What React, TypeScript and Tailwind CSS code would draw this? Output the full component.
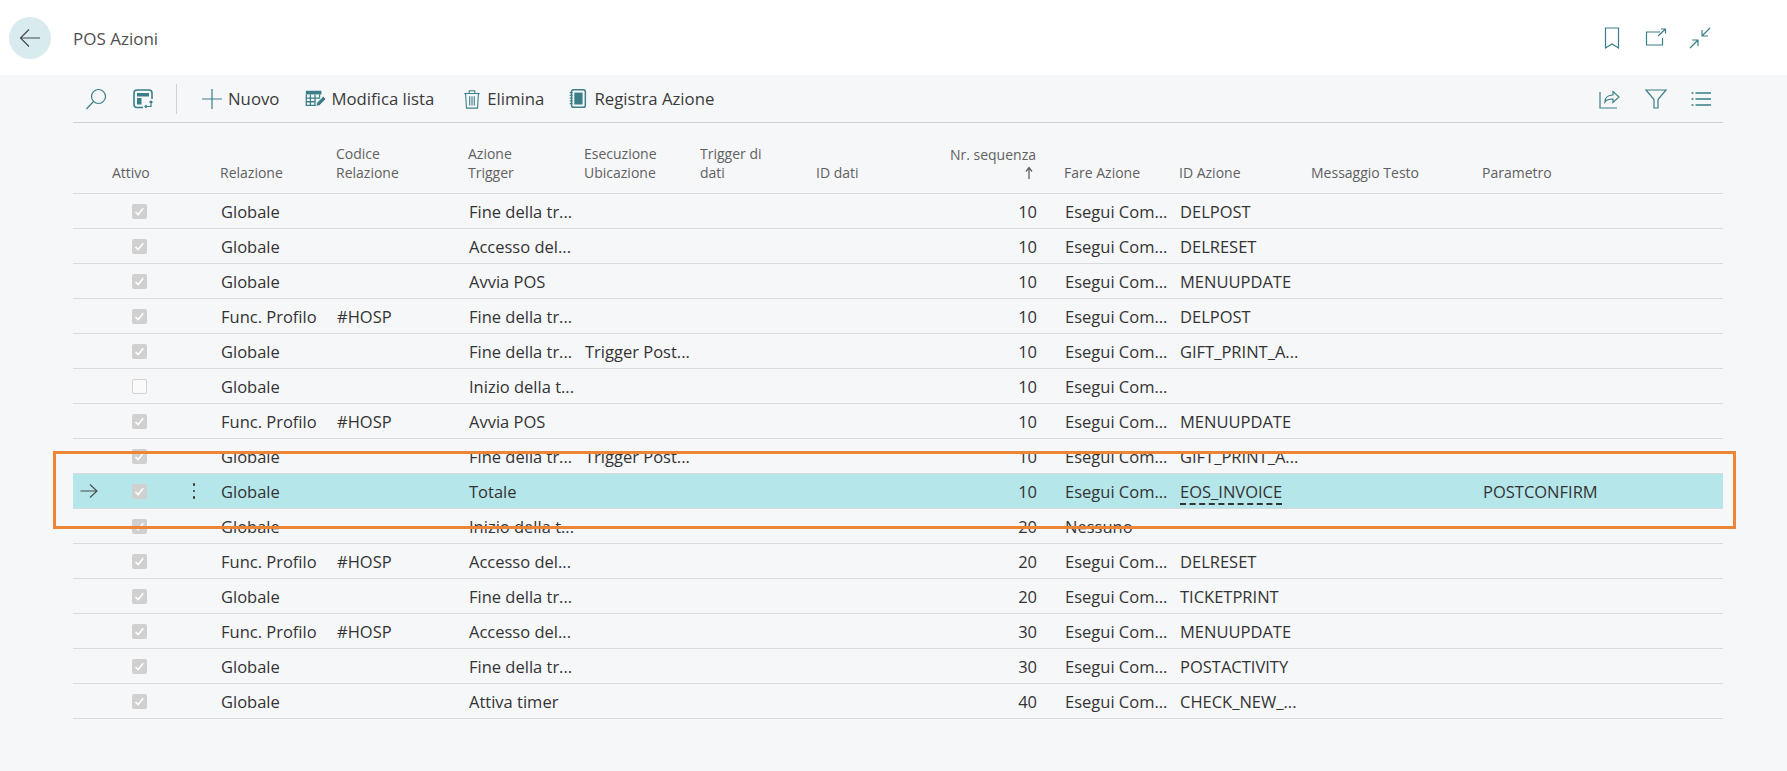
import React from 'react';

type Row = {
  on: boolean;
  rel: string;
  code?: string;
  trigger: string;
  loc?: string;
  seq: number;
  does: string;
  id?: string;
  param?: string;
  selected?: boolean;
};

const rows: Row[] = [
  { on: true, rel: 'Globale', trigger: 'Fine della tr...', seq: 10, does: 'Esegui Com...', id: 'DELPOST' },
  { on: true, rel: 'Globale', trigger: 'Accesso del...', seq: 10, does: 'Esegui Com...', id: 'DELRESET' },
  { on: true, rel: 'Globale', trigger: 'Avvia POS', seq: 10, does: 'Esegui Com...', id: 'MENUUPDATE' },
  { on: true, rel: 'Func. Profilo', code: '#HOSP', trigger: 'Fine della tr...', seq: 10, does: 'Esegui Com...', id: 'DELPOST' },
  { on: true, rel: 'Globale', trigger: 'Fine della tr...', loc: 'Trigger Post...', seq: 10, does: 'Esegui Com...', id: 'GIFT_PRINT_A...' },
  { on: false, rel: 'Globale', trigger: 'Inizio della t...', seq: 10, does: 'Esegui Com...' },
  { on: true, rel: 'Func. Profilo', code: '#HOSP', trigger: 'Avvia POS', seq: 10, does: 'Esegui Com...', id: 'MENUUPDATE' },
  { on: true, rel: 'Globale', trigger: 'Fine della tr...', loc: 'Trigger Post...', seq: 10, does: 'Esegui Com...', id: 'GIFT_PRINT_A...' },
  { on: true, rel: 'Globale', trigger: 'Totale', seq: 10, does: 'Esegui Com...', id: 'EOS_INVOICE', param: 'POSTCONFIRM', selected: true },
  { on: true, rel: 'Globale', trigger: 'Inizio della t...', seq: 20, does: 'Nessuno' },
  { on: true, rel: 'Func. Profilo', code: '#HOSP', trigger: 'Accesso del...', seq: 20, does: 'Esegui Com...', id: 'DELRESET' },
  { on: true, rel: 'Globale', trigger: 'Fine della tr...', seq: 20, does: 'Esegui Com...', id: 'TICKETPRINT' },
  { on: true, rel: 'Func. Profilo', code: '#HOSP', trigger: 'Accesso del...', seq: 30, does: 'Esegui Com...', id: 'MENUUPDATE' },
  { on: true, rel: 'Globale', trigger: 'Fine della tr...', seq: 30, does: 'Esegui Com...', id: 'POSTACTIVITY' },
  { on: true, rel: 'Globale', trigger: 'Attiva timer', seq: 40, does: 'Esegui Com...', id: 'CHECK_NEW_...' },
];

const grid = 'grid grid-cols-[39px_68px_40px_116px_132px_116px_116px_116px_248px_115px_132px_171px_241px]';
const cell = 'pl-px pt-[2px] whitespace-nowrap';

function Icon({ children, className }: { children: React.ReactNode; className: string }) {
  return (
    <svg viewBox="0 0 24 24" fill="none" stroke="currentColor" strokeWidth="1.2" className={`shrink-0 text-[#3a7f87] ${className}`}>
      {children}
    </svg>
  );
}

function Check({ on }: { on: boolean }) {
  if (!on) return <div className="h-[15px] w-[15px] rounded-[2px] border border-[#d2d2d2] bg-[#fafafa]" />;
  return (
    <div className="flex h-[15px] w-[15px] items-center justify-center rounded-[2px] bg-[#d0d0d0]">
      <svg viewBox="0 0 15 15" fill="none" stroke="white" strokeWidth="1.6" className="h-[15px] w-[15px]">
        <path d="M3.5 8l2.6 2.6 5.2-6.4" />
      </svg>
    </div>
  );
}

function Action({ icon, label, className }: { icon: React.ReactNode; label: string; className: string }) {
  return (
    <div className={`flex items-center ${className}`}>
      {icon}
      <span className="text-[16.75px] text-[#3a3a3a]">{label}</span>
    </div>
  );
}

export default function App() {
  return (
    <div className="relative min-h-screen bg-[#f6f7f9] font-['Open_Sans','Liberation_Sans',sans-serif]">
      {/* page header */}
      <div className="flex h-[75px] items-center bg-white pl-[9px] pr-[75px]">
        <div className="flex h-[42px] w-[42px] items-center justify-center rounded-full bg-[#d8ecef]">
          <svg viewBox="0 0 24 24" fill="none" stroke="#4a4a4a" strokeWidth="1.2" className="h-[24px] w-[24px]">
            <path d="M22 12H2.5M11 3.5L2.5 12l8.5 8.5" />
          </svg>
        </div>
        <div className="ml-[22px] mt-[3px] text-[17px] text-[#505050]">POS Azioni</div>
        <div className="ml-auto flex items-center gap-[20px]">
          <Icon className="h-[24px] w-[24px]">
            <path d="M5.5 2h13v20l-6.5-4-6.5 4z" />
          </Icon>
          <Icon className="h-[24px] w-[24px]">
            <path d="M16 6H2.5v13h16v-7M14 10l7-6.5M17 3h4.5v4.5" />
          </Icon>
          <Icon className="h-[24px] w-[24px]">
            <path d="M2 22l8-8M4 14h6v6M22 2l-8 8M14 4v6h6" />
          </Icon>
        </div>
      </div>

      <div className="ml-[73px] mr-[64px]">
        {/* toolbar */}
        <div className="flex h-[48px] items-center border-b border-[#cfd1d4]">
          <Icon className="ml-[11px] h-[24px] w-[24px]">
            <circle cx="14.5" cy="9.5" r="7" />
            <path d="M9.5 14.5L2.5 22" />
          </Icon>
          <Icon className="ml-[23px] h-[24px] w-[24px]">
            <path d="M12 20.500H6a3 3 0 0 1-3-3V6a3 3 0 0 1 3-3h12a3 3 0 0 1 3 3v6" strokeWidth="1.6" />
            <rect x="6" y="6" width="12" height="3.5" fill="currentColor" stroke="none" />
            <rect x="6" y="11" width="4.5" height="6.500" fill="currentColor" stroke="none" />
            <path d="M14 19.500h6v-5M18.500 15.500l1.500-1.500 1.500 1.500M15.500 18l-1.500 1.500 1.500 1.500" />
          </Icon>
          <div className="ml-[21px] h-[30px] w-px bg-[#cfd1d4]" />
          <Action
            className="ml-[23px]"
            label="Nuovo"
            icon={
              <Icon className="mr-[4px] h-[24px] w-[24px]">
                <path d="M12 2v20M2 12h20" />
              </Icon>
            }
          />
          <Action
            className="ml-[25px]"
            label="Modifica lista"
            icon={
              <Icon className="mr-[5px] h-[22px] w-[22px]">
                <rect x="2" y="3" width="17" height="4" fill="currentColor" stroke="none" />
                <path d="M2.5 7v12h11M2.5 11h15M2.5 15h10M7 7v12M12 7v12M17 7v3" strokeWidth="1.4" />
                <path d="M13 20l1-4 7-7 3 3-7 7z" fill="currentColor" stroke="#f6f7f9" strokeWidth="0.8" />
              </Icon>
            }
          />
          <Action
            className="ml-[27px]"
            label="Elimina"
            icon={
              <Icon className="mr-[4px] h-[22px] w-[22px]">
                <path d="M5 6h14l-1 16H6zM3.5 6h17M9 6V3h6v3M9.5 9v10M12 9v10M14.5 9v10" />
              </Icon>
            }
          />
          <Action
            className="ml-[23px]"
            label="Registra Azione"
            icon={
              <Icon className="mr-[5px] h-[22px] w-[22px]">
                <rect x="5" y="2" width="15" height="19" rx="2" strokeWidth="1.6" />
                <rect x="8" y="5" width="9" height="13" fill="currentColor" stroke="none" />
                <path d="M3 5h3M3 8h3M3 11h3M3 14h3M3 17h3" />
              </Icon>
            }
          />
          <div className="ml-auto mr-[10px] flex items-center gap-[21px]">
            <Icon className="mr-[2px] h-[24px] w-[24px]">
              <path d="M3 5v16h17M8 15c0-4.500 3.500-7 8-7V4.500L22 10l-6 5.500V12c-3.500 0-6.500 .8-8 3z" />
            </Icon>
            <Icon className="h-[24px] w-[24px]">
              <path d="M2 3h20l-8 9.500V21h-4v-8.500z" />
            </Icon>
            <Icon className="h-[24px] w-[24px]">
              <path d="M6.500 6H22M6.500 12H22M6.500 18H22M2.500 6H4.500M2.500 12H4.500M2.500 18H4.500" strokeWidth="1.5" />
            </Icon>
          </div>
        </div>

        {/* column headers */}
        <div className={`${grid} h-[71px] items-end border-b border-[#d9dbde] pb-[11px] text-[14px] leading-[19px] text-[#616161]`}>
          <div />
          <div>Attivo</div>
          <div />
          <div>Relazione</div>
          <div>Codice<br />Relazione</div>
          <div>Azione<br />Trigger</div>
          <div>Esecuzione<br />Ubicazione</div>
          <div>Trigger di<br />dati</div>
          <div className="flex items-end justify-between pr-[28px]">
            <div>ID dati</div>
            <div className="flex flex-col items-end whitespace-nowrap">
              <div>Nr. sequenza</div>
              <svg viewBox="0 0 12 14" fill="none" stroke="#616161" strokeWidth="1.3" className="mb-[2px] mr-px mt-[2px] h-[14px] w-[12px]">
                <path d="M6 13V2M3 5.500L6 1.500l3 4" />
              </svg>
            </div>
          </div>
          <div>Fare Azione</div>
          <div>ID Azione</div>
          <div>Messaggio Testo</div>
          <div>Parametro</div>
        </div>

        {/* rows */}
        {rows.map((r, i) => (
          <div
            key={i}
            className={`${grid} h-[35px] items-center border-b border-[#d9dbde] text-[16.5px] text-[#333] ${r.selected ? 'bg-[#b5e6ea]' : ''}`}
          >
            <div className="flex justify-start pl-[6px]">
              {r.selected && (
                <svg viewBox="0 0 20 20" fill="none" stroke="#4a4a4a" strokeWidth="1.1" className="h-[20px] w-[20px]">
                  <path d="M1.500 10H18M11 3.500L18 10l-7 6.500" />
                </svg>
              )}
            </div>
            <div className="pl-[20px]">
              <Check on={r.on} />
            </div>
            <div className="flex justify-end pr-[25px]">
              {r.selected && (
                <div className="flex flex-col gap-[4px]">
                  <div className="h-[2.500px] w-[2.500px] rounded-full bg-[#333]" />
                  <div className="h-[2.500px] w-[2.500px] rounded-full bg-[#333]" />
                  <div className="h-[2.500px] w-[2.500px] rounded-full bg-[#333]" />
                </div>
              )}
            </div>
            <div className={cell}>{r.rel}</div>
            <div className={cell}>{r.code}</div>
            <div className={cell}>{r.trigger}</div>
            <div className={cell}>{r.loc}</div>
            <div />
            <div className="pr-[27px] pt-[2px] text-right">{r.seq}</div>
            <div className={cell}>{r.does}</div>
            <div className={cell}>
              {r.selected ? <span className="border-b-2 border-dashed border-[#333]">{r.id}</span> : r.id}
            </div>
            <div />
            <div className={cell}>{r.param}</div>
          </div>
        ))}
      </div>

      {/* annotation box drawn over the selected row */}
      <div className="pointer-events-none absolute left-[53px] top-[451px] h-[78px] w-[1683px] border-[3px] border-[#ed8537]" />
    </div>
  );
}
